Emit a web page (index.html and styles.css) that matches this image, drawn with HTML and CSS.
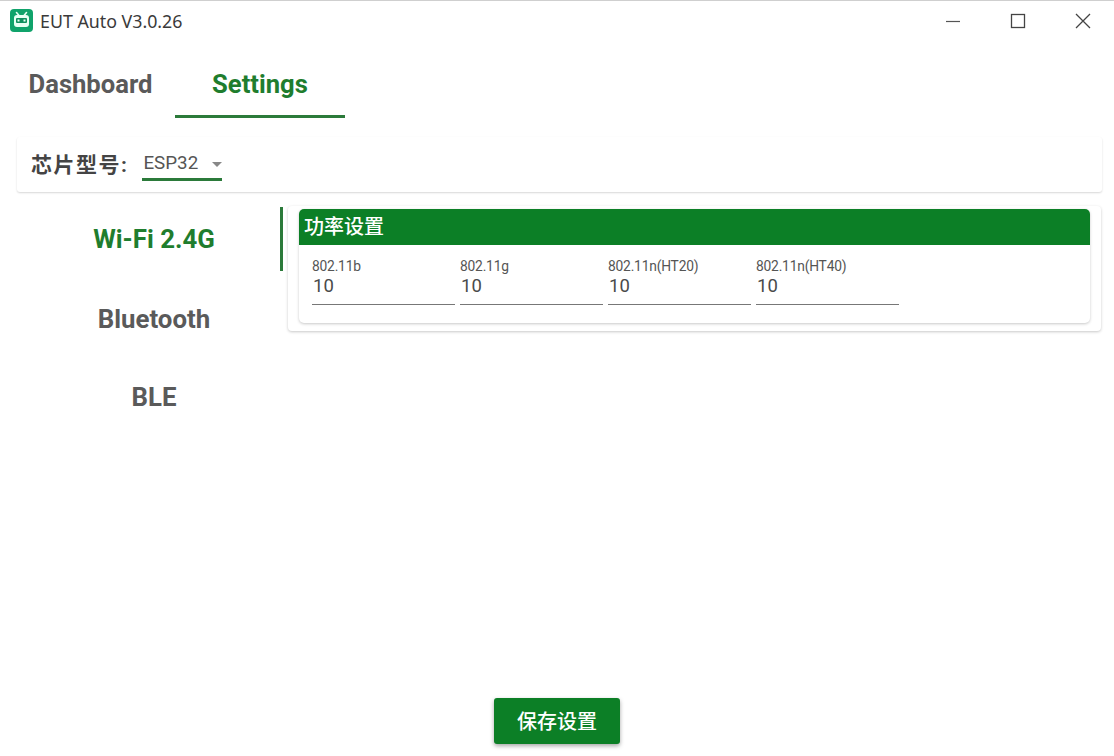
FILE: index.html
```html
<!DOCTYPE html>
<html lang="zh">
<head>
<meta charset="utf-8">
<title>EUT Auto V3.0.26</title>
<link rel="stylesheet" href="styles.css">
</head>
<body>
<div class="app">
  <header class="titlebar">
    <div class="title-left">
      <svg class="logo" width="23" height="23" viewBox="0 0 23 23">
        <rect width="23" height="23" rx="4" fill="#10a36b"/>
        <path d="M6.5 3.5l2.5 3M16.5 3.5l-2.5 3" stroke="#e8fff4" stroke-width="1.6" stroke-linecap="round"/>
        <rect x="4" y="6" width="15" height="12" rx="3" fill="#e8fff4"/>
        <rect x="6" y="9" width="11" height="5" rx="1" fill="#0f8f5e"/>
        <rect x="7.5" y="10.5" width="2" height="2" fill="#e8fff4"/>
        <rect x="13.5" y="10.5" width="2" height="2" fill="#e8fff4"/>
      </svg>
      <span class="app-title">EUT Auto V3.0.26</span>
    </div>
    <div class="win-controls">
      <svg class="win-icon" width="16" height="16" viewBox="0 0 16 16"><path d="M1 8.5h14" stroke="#555" stroke-width="1.2"/></svg>
      <svg class="win-icon" width="16" height="16" viewBox="0 0 16 16"><rect x="1.5" y="1.5" width="13" height="13" fill="none" stroke="#444" stroke-width="1.3"/></svg>
      <svg class="win-icon" width="16" height="16" viewBox="0 0 16 16"><path d="M1 1l14 14M15 1L1 15" stroke="#444" stroke-width="1.3"/></svg>
    </div>
  </header>

  <nav class="tabs">
    <div class="tab">Dashboard</div>
    <div class="tab active">Settings</div>
  </nav>

  <section class="chip-bar">
    <span class="chip-label">芯片型号:</span>
    <div class="select">
      <span class="select-value">ESP32</span>
      <span class="select-arrow"></span>
    </div>
  </section>

  <main class="content">
    <aside class="side">
      <div class="side-item active">Wi-Fi 2.4G</div>
      <div class="side-item">Bluetooth</div>
      <div class="side-item last">BLE</div>
    </aside>
    <section class="panel">
      <div class="card">
        <div class="card-head">功率设置</div>
        <div class="fields">
          <div class="field"><label>802.11b</label><div class="value">10</div></div>
          <div class="field"><label>802.11g</label><div class="value">10</div></div>
          <div class="field"><label>802.11n(HT20)</label><div class="value">10</div></div>
          <div class="field"><label>802.11n(HT40)</label><div class="value">10</div></div>
        </div>
      </div>
    </section>
  </main>

  <footer class="footer">
    <button class="save">保存设置</button>
  </footer>
</div>
</body>
</html>
```
FILE: styles.css
```css
* { box-sizing: border-box; }
html, body { margin: 0; padding: 0; background: #fff; }
body { font-family: Roboto, "Noto Sans CJK SC", sans-serif; color: #555; }
.app {
  width: 1114px;
  height: 756px;
  display: flex;
  flex-direction: column;
  border-top: 1px solid #cfcfcf;
  overflow: hidden;
}
.titlebar {
  height: 39px;
  display: flex;
  justify-content: space-between;
  align-items: center;
  flex: none;
}
.title-left { display: flex; align-items: center; padding-left: 10px; }
.logo { display: block; margin-top: -1px; }
.app-title { margin-left: 7px; font-family: "Noto Sans", "Open Sans", sans-serif; font-size: 17.8px; color: #3a3a3a; }
.win-controls { display: flex; gap: 49px; padding-right: 23px; }
.win-icon { display: block; }
.tabs { display: flex; height: 78px; flex: none; padding-left: 4px; }
.tab {
  font-size: 25.6px;
  font-weight: 700;
  color: #5a5a5a;
  width: 171px;
  height: 78px;
  display: flex;
  align-items: center;
  justify-content: center;
  padding: 10px 0 0 2px;
}
.tab.active { color: #1f7d2e; width: 170px; border-bottom: 3px solid #2b7a3a; padding: 13px 0 0; }
.chip-bar {
  margin: 19px 12px 0 17px;
  height: 55px;
  flex: none;
  display: flex;
  align-items: center;
  padding-left: 14px;
  border-radius: 3px;
  box-shadow: 0 1px 2px rgba(0,0,0,.16);
}
.chip-label { font-size: 21px; font-weight: 700; color: #444; letter-spacing: 1.5px; padding-bottom: 4px; }
.select {
  margin: 0 0 4px 14px;
  width: 80px;
  height: 36px;
  border-bottom: 3px solid #2b7a3a;
  display: flex;
  align-items: center;
  padding: 4px 0 0 1px;
  justify-content: space-between;
}
.select-value { font-size: 18.8px; color: #555; }
.select-arrow {
  flex: none;
  width: 0; height: 0;
  border-left: 5.5px solid transparent;
  border-right: 5.5px solid transparent;
  border-top: 5.5px solid #888;
  margin-top: 2px;
}
.content { flex: 1; display: flex; min-height: 0; padding-top: 14px; }
.side { width: 283px; flex: none; display: flex; flex-direction: column; padding: 1px 0 0 26px; }
.side-item {
  flex: none;
  height: 64px;
  width: 257px;
  margin-bottom: 16px;
  padding-left: 2px;
  font-size: 25.8px;
  font-weight: 700;
  color: #5a5a5a;
  display: flex;
  align-items: center;
  justify-content: center;
  border-right: 3px solid transparent;
}
.side-item.active { color: #1f7d2e; border-right-color: #2b7a3a; }
.side-item.last { margin-top: -2px; }
.panel {
  margin-left: 5px;
  width: 813px;
  height: 125px;
  padding: 3px 11px 0 11px;
  border-radius: 4px;
  box-shadow: 0 1px 3px rgba(0,0,0,.22);
}
.card { height: 114px; border-radius: 5px; box-shadow: 0 1px 3px rgba(0,0,0,.22); overflow: hidden; }
.card-head {
  height: 36px;
  background: #0c7f26;
  color: #fff;
  font-size: 20px;
  font-weight: 500;
  display: flex;
  align-items: center;
  padding: 0 0 4px 5px;
}
.fields { display: flex; gap: 5.5px; padding: 15px 0 0 13px; }
.field { width: 142.5px; height: 45px; border-bottom: 1px solid #777; }
.field label { display: block; font-size: 13.8px; line-height: 14px; color: #555; letter-spacing: -.2px; margin: -1px 0 1px; }
.value { font-size: 18.5px; line-height: 24px; color: #4a4a4a; padding-left: 1px; }
.footer { flex: none; height: 58px; display: flex; justify-content: center; }
.save {
  width: 126px;
  height: 46px;
  background: #0c7f26;
  color: #fff;
  border: 0;
  border-radius: 3px;
  font-family: inherit;
  font-size: 20px;
  font-weight: 500;
  box-shadow: 0 2px 4px rgba(0,0,0,.35);
  padding: 0 0 2px;
}
```
